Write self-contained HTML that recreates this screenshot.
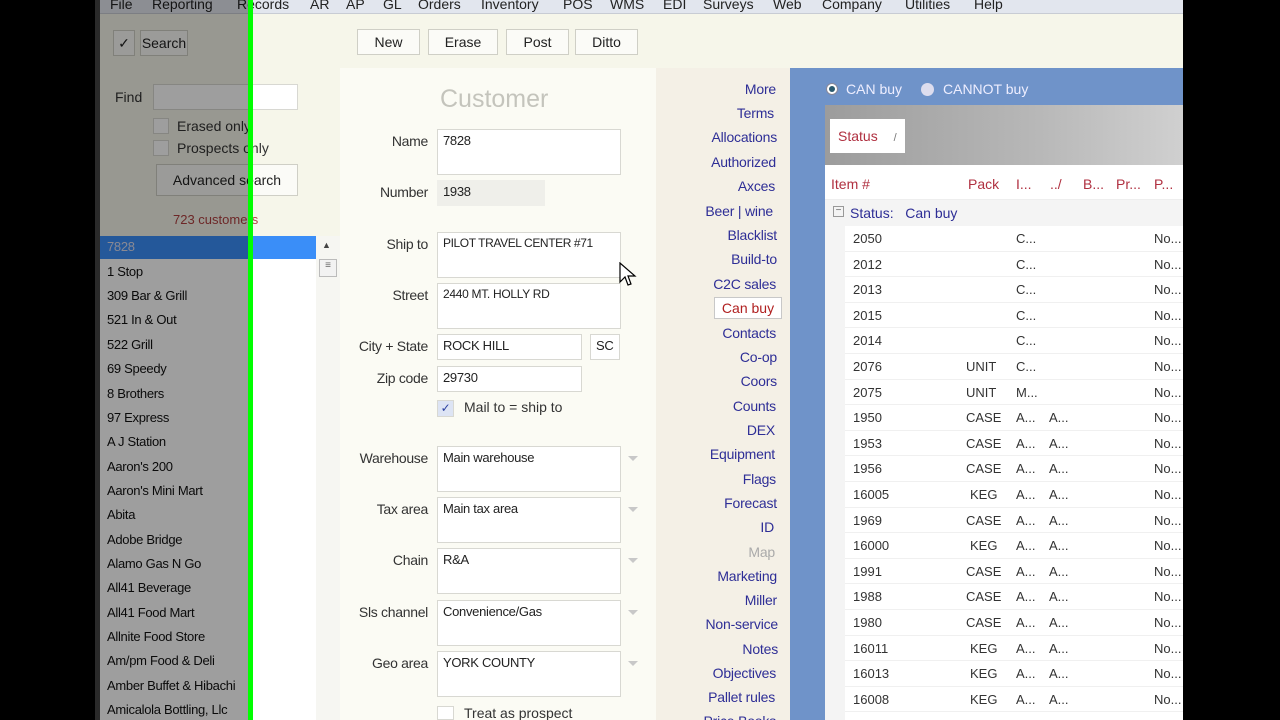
<!DOCTYPE html>
<html><head><meta charset="utf-8"><style>
*{margin:0;padding:0;box-sizing:border-box}
html{width:1280px;height:720px;overflow:hidden}
body{width:1280px;height:720px;overflow:hidden;background:#000;font-family:"Liberation Sans",sans-serif;font-size:13px;position:relative;color:#333}
.a{position:absolute;white-space:nowrap}
.menu{left:95px;top:0;width:1088px;height:14px;background:#e2e6ee;border-bottom:1px solid #c8ccd4}
.menu span{position:absolute;top:-4px;font-size:14px;color:#222}
.tb{left:95px;top:14px;width:1088px;height:54px;background:#f6f6ea}
.btn{position:absolute;top:29px;height:26px;border:1px solid #cfcfc6;background:#fbfbf7;text-align:center;line-height:24px;font-size:14px;color:#222}
.lbl{position:absolute;text-align:right;width:100px;font-size:14px;color:#333;letter-spacing:-0.3px}
.fld{position:absolute;border:1px solid #d8d8d2;background:#fff;font-size:13px;padding:3px 5px;color:#222;white-space:nowrap;overflow:hidden;letter-spacing:-0.3px}
.link{position:absolute;right:0;width:120px;text-align:right;font-size:14px;color:#2e2e96;letter-spacing:-0.2px}
.row{position:absolute;left:845px;width:338px;height:25.6px;border-bottom:1px solid #f0f0f0;font-size:13px;background:#fff}
.row span{position:absolute;top:5px}
.li{position:absolute;left:107px;font-size:13px;color:#111;letter-spacing:-0.3px;white-space:nowrap}
.dd{position:absolute;left:628px;width:0;height:0;border-left:5px solid transparent;border-right:5px solid transparent;border-top:5px solid #c8c8c8}
</style></head><body>
<div class="a menu">
<span style="left:15px">File</span><span style="left:57px">Reporting</span><span style="left:142px">Records</span><span style="left:215px">AR</span><span style="left:251px">AP</span><span style="left:288px">GL</span><span style="left:323px">Orders</span><span style="left:386px">Inventory</span><span style="left:468px">POS</span><span style="left:515px">WMS</span><span style="left:568px">EDI</span><span style="left:608px">Surveys</span><span style="left:678px">Web</span><span style="left:727px">Company</span><span style="left:810px">Utilities</span><span style="left:879px">Help</span>
</div>
<div class="a tb"></div>
<div class="btn" style="left:113px;width:22px;top:30px">✓</div>
<div class="btn" style="left:140px;width:48px;top:30px">Search</div>
<div class="btn" style="left:357px;width:63px">New</div>
<div class="btn" style="left:428px;width:70px">Erase</div>
<div class="btn" style="left:506px;width:63px">Post</div>
<div class="btn" style="left:575px;width:63px">Ditto</div>
<div class="a" style="left:95px;top:68px;width:245px;height:168px;background:#f6f6ea"></div>
<div class="a" style="left:115px;top:89px;font-size:14px">Find</div>
<div class="fld" style="left:153px;top:84px;width:145px;height:26px"></div>
<div class="fld" style="left:153px;top:118px;width:16px;height:16px;padding:0"></div>
<div class="a" style="left:177px;top:118px;font-size:14px">Erased only</div>
<div class="fld" style="left:153px;top:140px;width:16px;height:16px;padding:0"></div>
<div class="a" style="left:177px;top:140px;font-size:14px">Prospects only</div>
<div class="btn" style="left:156px;top:164px;width:142px;height:32px;line-height:30px">Advanced search</div>
<div class="a" style="left:173px;top:212px;font-size:13px;color:#b04040">723 customers</div>
<div class="a" style="left:100px;top:236px;width:240px;height:484px;background:#fff"></div>
<div class="a" style="left:100px;top:236px;width:216px;height:23px;background:#3a8ef8"></div>
<div class="li" style="top:239px;color:#dde">7828</div>
<div class="a" style="left:316px;top:236px;width:24px;height:484px;background:#f6f6f2"></div>
<div class="a" style="left:322px;top:240px;font-size:9px;color:#444">▲</div>
<div class="a" style="left:319px;top:259px;width:18px;height:18px;border:1px solid #bbb;background:#f2f2f2;font-size:10px;text-align:center;color:#666">≡</div>
<div class="li" style="top:264px">1 Stop</div>
<div class="li" style="top:288px">309 Bar &amp; Grill</div>
<div class="li" style="top:312px">521 In &amp; Out</div>
<div class="li" style="top:337px">522 Grill</div>
<div class="li" style="top:361px">69 Speedy</div>
<div class="li" style="top:386px">8 Brothers</div>
<div class="li" style="top:410px">97 Express</div>
<div class="li" style="top:434px">A J Station</div>
<div class="li" style="top:459px">Aaron's 200</div>
<div class="li" style="top:483px">Aaron's Mini Mart</div>
<div class="li" style="top:507px">Abita</div>
<div class="li" style="top:532px">Adobe Bridge</div>
<div class="li" style="top:556px">Alamo Gas N Go</div>
<div class="li" style="top:580px">All41 Beverage</div>
<div class="li" style="top:605px">All41 Food Mart</div>
<div class="li" style="top:629px">Allnite Food Store</div>
<div class="li" style="top:653px">Am/pm Food &amp; Deli</div>
<div class="li" style="top:678px">Amber Buffet &amp; Hibachi</div>
<div class="li" style="top:702px">Amicalola Bottling, Llc</div>
<div class="a" style="left:340px;top:68px;width:316px;height:652px;background:#fbfbf4"></div>
<div class="a" style="left:440px;top:85px;font-size:25px;color:#c4c4bc">Customer</div>
<div class="lbl" style="left:328px;top:133px">Name</div>
<div class="fld" style="left:437px;top:129px;width:184px;height:46px">7828</div>
<div class="lbl" style="left:328px;top:184px">Number</div>
<div class="fld" style="left:437px;top:180px;width:108px;height:26px;background:#efefea;border-color:#efefea">1938</div>
<div class="lbl" style="left:328px;top:236px">Ship to</div>
<div class="fld" style="left:437px;top:232px;width:184px;height:46px;font-size:12px;letter-spacing:-0.4px">PILOT TRAVEL CENTER #71</div>
<div class="lbl" style="left:328px;top:287px">Street</div>
<div class="fld" style="left:437px;top:283px;width:184px;height:46px;font-size:12px">2440 MT. HOLLY RD</div>
<div class="lbl" style="left:328px;top:338px">City + State</div>
<div class="fld" style="left:437px;top:334px;width:145px;height:26px">ROCK HILL</div>
<div class="fld" style="left:590px;top:334px;width:30px;height:26px">SC</div>
<div class="lbl" style="left:328px;top:370px">Zip code</div>
<div class="fld" style="left:437px;top:366px;width:145px;height:26px">29730</div>
<div class="fld" style="left:437px;top:400px;width:17px;height:17px;padding:0;background:#dde4f4;color:#2a3fa0;font-size:12px;text-align:center;line-height:15px">✓</div>
<div class="a" style="left:464px;top:399px;font-size:14px">Mail to = ship to</div>
<div class="lbl" style="left:328px;top:450px">Warehouse</div>
<div class="fld" style="left:437px;top:446px;width:184px;height:46px">Main warehouse</div><div class="dd" style="top:456px"></div>
<div class="lbl" style="left:328px;top:501px">Tax area</div>
<div class="fld" style="left:437px;top:497px;width:184px;height:46px">Main tax area</div><div class="dd" style="top:507px"></div>
<div class="lbl" style="left:328px;top:552px">Chain</div>
<div class="fld" style="left:437px;top:548px;width:184px;height:46px">R&amp;A</div><div class="dd" style="top:558px"></div>
<div class="lbl" style="left:328px;top:604px">Sls channel</div>
<div class="fld" style="left:437px;top:600px;width:184px;height:46px">Convenience/Gas</div><div class="dd" style="top:610px"></div>
<div class="lbl" style="left:328px;top:655px">Geo area</div>
<div class="fld" style="left:437px;top:651px;width:184px;height:46px">YORK COUNTY</div><div class="dd" style="top:661px"></div>
<div class="fld" style="left:437px;top:706px;width:17px;height:14px;padding:0"></div>
<div class="a" style="left:464px;top:705px;font-size:14px">Treat as prospect</div>
<svg class="a" style="left:619px;top:262px" width="18" height="26" viewBox="0 0 18 26"><path d="M1 1 L1 20 L6 15 L9 23 L12 22 L9 14 L16 14 Z" fill="#fff" stroke="#000" stroke-width="1.2"/></svg>
<div class="a" style="left:656px;top:68px;width:134px;height:652px;background:#f4f0e6;overflow:hidden">
<div class="link" style="right:14px;top:13px">More</div>
<div class="link" style="right:16px;top:37px">Terms</div>
<div class="link" style="right:13px;top:61px">Allocations</div>
<div class="link" style="right:14px;top:86px">Authorized</div>
<div class="link" style="right:15px;top:110px">Axces</div>
<div class="link" style="right:17px;top:135px">Beer | wine</div>
<div class="link" style="right:13px;top:159px">Blacklist</div>
<div class="link" style="right:13px;top:183px">Build-to</div>
<div class="link" style="right:14px;top:208px">C2C sales</div>
<div class="a" style="left:58px;top:229px;width:68px;height:22px;border:1px solid #c8c8c8;background:#fff;color:#b02020;font-size:14px;text-align:center;line-height:20px">Can buy</div>
<div class="link" style="right:14px;top:257px">Contacts</div>
<div class="link" style="right:13px;top:281px">Co-op</div>
<div class="link" style="right:13px;top:305px">Coors</div>
<div class="link" style="right:14px;top:330px">Counts</div>
<div class="link" style="right:15px;top:354px">DEX</div>
<div class="link" style="right:15px;top:378px">Equipment</div>
<div class="link" style="right:14px;top:403px">Flags</div>
<div class="link" style="right:13px;top:427px">Forecast</div>
<div class="link" style="right:16px;top:451px">ID</div>
<div class="link" style="right:15px;top:476px;color:#aaa">Map</div>
<div class="link" style="right:13px;top:500px">Marketing</div>
<div class="link" style="right:13px;top:524px">Miller</div>
<div class="link" style="right:12px;top:548px">Non-service</div>
<div class="link" style="right:12px;top:573px">Notes</div>
<div class="link" style="right:14px;top:597px">Objectives</div>
<div class="link" style="right:15px;top:621px">Pallet rules</div>
<div class="link" style="right:14px;top:645px">Price Books</div>
</div>
<div class="a" style="left:790px;top:68px;width:393px;height:652px;background:#6f93c9"></div>
<div class="a" style="left:826px;top:83px;width:12px;height:12px;border-radius:50%;background:#fff;border:1px solid #889"><div style="margin:2px;width:6px;height:6px;border-radius:50%;background:#2a5a70"></div></div>
<div class="a" style="left:846px;top:81px;font-size:14px;color:#eef">CAN buy</div>
<div class="a" style="left:921px;top:83px;width:13px;height:13px;border-radius:50%;background:#dde"></div>
<div class="a" style="left:943px;top:81px;font-size:14px;color:#eef">CANNOT buy</div>
<div class="a" style="left:825px;top:105px;width:358px;height:615px;background:#fff;overflow:hidden">
<div class="a" style="left:0;top:0;width:358px;height:60px;background:linear-gradient(90deg,#9c9c9c,#b8b8b8 60%,#d0d0d0)"></div>
<div class="a" style="left:5px;top:14px;width:75px;height:34px;background:#fff;color:#b03040;font-size:14px;padding:9px 0 0 8px">Status <span style="margin-left:12px;color:#777;font-size:11px">/</span></div>
<div class="a" style="left:0;top:63px;width:358px;height:32px;background:#fff;border-bottom:1px solid #eee;color:#b03040;font-size:14px">
<span class="a" style="left:6px;top:8px">Item #</span><span class="a" style="left:143px;top:8px">Pack</span><span class="a" style="left:191px;top:8px">I...</span><span class="a" style="left:225px;top:8px">../</span><span class="a" style="left:258px;top:8px">B...</span><span class="a" style="left:291px;top:8px">Pr...</span><span class="a" style="left:329px;top:8px">P...</span></div>
<div class="a" style="left:0;top:95px;width:358px;height:26px;background:#f4f4f4"></div>
<div class="a" style="left:8px;top:101px;width:11px;height:11px;border:1px solid #999;font-size:10px;line-height:8px;text-align:center;color:#666">−</div>
<div class="a" style="left:25px;top:100px;font-size:14px;color:#2e2e96">Status: &nbsp;&nbsp;Can buy</div>
<div class="a" style="left:0;top:121px;width:20px;height:494px;background:#f4f4f4"></div>
<div id="rows"></div>
</div>
<script>
var d=[["2050","","C...",""],["2012","","C...",""],["2013","","C...",""],["2015","","C...",""],["2014","","C...",""],["2076","UNIT","C...",""],["2075","UNIT","M...",""],["1950","CASE","A...","A..."],["1953","CASE","A...","A..."],["1956","CASE","A...","A..."],["16005","KEG","A...","A..."],["1969","CASE","A...","A..."],["16000","KEG","A...","A..."],["1991","CASE","A...","A..."],["1988","CASE","A...","A..."],["1980","CASE","A...","A..."],["16011","KEG","A...","A..."],["16013","KEG","A...","A..."],["16008","KEG","A...","A..."],["1994","CASE","A...","A..."]];
var h="";d.forEach(function(r,i){h+='<div class="row" style="left:20px;top:'+(121+i*25.6)+'px"><span style="left:8px">'+r[0]+'</span><span style="left:'+(r[1]=="KEG"?125:121)+'px">'+r[1]+'</span><span style="left:171px">'+r[2]+'</span><span style="left:204px">'+r[3]+'</span><span style="left:309px">No...</span></div>'});document.getElementById("rows").innerHTML=h;
</script>
<div class="a" style="left:95px;top:0;width:5px;height:720px;background:#2a2a2a"></div>
<div class="a" style="left:100px;top:0;width:148px;height:720px;background:rgba(0,0,0,0.38)"></div>
<div class="a" style="left:248px;top:0;width:5px;height:720px;background:#0f0"></div>
<div class="a" style="left:1183px;top:0;width:97px;height:720px;background:#000"></div>
</body></html>
